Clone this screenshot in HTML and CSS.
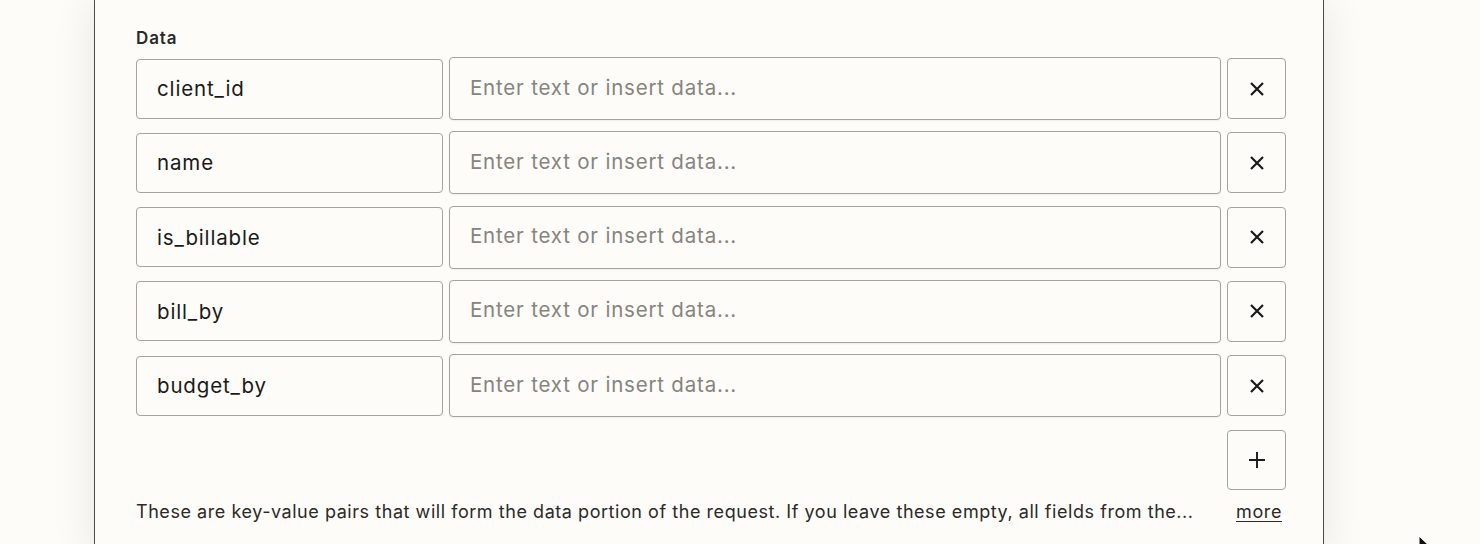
FILE: index.html
```html
<!DOCTYPE html>
<html lang="en">
<head>
<meta charset="utf-8">
<title>Data fields</title>
<link rel="stylesheet" href="styles.css">
</head>
<body>
<div class="stage">
  <section class="panel">
    <div class="field">
      <label class="field-label">Data</label>
      <div class="rows">
        <div class="row">
          <div class="key">client_id</div>
          <div class="value"><span class="placeholder">Enter text or insert data...</span></div>
          <button class="icon-btn" aria-label="Remove"><svg viewBox="0 0 16 16" width="16" height="16"><path d="M2 2L14 14M14 2L2 14" stroke="#1a1a1a" stroke-width="2.2" fill="none"/></svg></button>
        </div>
        <div class="row">
          <div class="key">name</div>
          <div class="value"><span class="placeholder">Enter text or insert data...</span></div>
          <button class="icon-btn" aria-label="Remove"><svg viewBox="0 0 16 16" width="16" height="16"><path d="M2 2L14 14M14 2L2 14" stroke="#1a1a1a" stroke-width="2.2" fill="none"/></svg></button>
        </div>
        <div class="row">
          <div class="key">is_billable</div>
          <div class="value"><span class="placeholder">Enter text or insert data...</span></div>
          <button class="icon-btn" aria-label="Remove"><svg viewBox="0 0 16 16" width="16" height="16"><path d="M2 2L14 14M14 2L2 14" stroke="#1a1a1a" stroke-width="2.2" fill="none"/></svg></button>
        </div>
        <div class="row">
          <div class="key">bill_by</div>
          <div class="value"><span class="placeholder">Enter text or insert data...</span></div>
          <button class="icon-btn" aria-label="Remove"><svg viewBox="0 0 16 16" width="16" height="16"><path d="M2 2L14 14M14 2L2 14" stroke="#1a1a1a" stroke-width="2.2" fill="none"/></svg></button>
        </div>
        <div class="row">
          <div class="key">budget_by</div>
          <div class="value"><span class="placeholder">Enter text or insert data...</span></div>
          <button class="icon-btn" aria-label="Remove"><svg viewBox="0 0 16 16" width="16" height="16"><path d="M2 2L14 14M14 2L2 14" stroke="#1a1a1a" stroke-width="2.2" fill="none"/></svg></button>
        </div>
      </div>
      <div class="add-row">
        <button class="icon-btn add" aria-label="Add"><svg viewBox="0 0 20 20" width="20" height="20"><path d="M10 2V18M2 10H18" stroke="#1a1a1a" stroke-width="1.9" fill="none"/></svg></button>
      </div>
      <div class="help">
        <p class="help-text">These are key-value pairs that will form the data portion of the request. If you leave these empty, all fields from the...</p>
        <a class="more" href="#">more</a>
      </div>
    </div>
  </section>
  <svg class="cursor" viewBox="0 0 12 18" width="12" height="18"><path d="M1 1L1 15L4.5 11.5L7 17L9 16L6.5 10.5L11 10.5Z" fill="#111" stroke="#fff" stroke-width="1"/></svg>
</div>
</body>
</html>
```

FILE: styles.css
```css
* { box-sizing: border-box; }

html, body {
  margin: 0;
  padding: 0;
  background: #fdfcf8;
  height: 544px;
  overflow: hidden;
  font-family: Inter, "Liberation Sans", sans-serif;
  color: #2b2a28;
}

.stage {
  position: relative;
  height: 544px;
  padding-left: 94px;
}

.panel {
  width: 1230px;
  height: 560px;
  background: #fdfcf8;
  border-left: 1px solid #4d4c49;
  border-right: 1px solid #4d4c49;
  box-shadow: 0 0 42px rgba(0, 0, 0, 0.09);
  padding: 27px 37px 0 41px;
}

.field-label {
  display: block;
  font-size: 17px;
  font-weight: 600;
  letter-spacing: 0.9px;
  line-height: 22px;
  color: #2b2a28;
  margin-bottom: 8px;
}

.rows {
  display: flex;
  flex-direction: column;
  gap: 11.3px;
}

.row {
  display: grid;
  grid-template-columns: 307px 772px 59px;
  column-gap: 6px;
  align-items: center;
}

.key {
  height: 60px;
  border: 1px solid #a5a39e;
  border-radius: 4px;
  padding: 0 20px;
  display: flex;
  align-items: center;
  font-size: 20.5px;
  letter-spacing: 0.85px;
  color: #1a1a19;
  background: #fdfcf8;
}

.value {
  height: 63px;
  border: 1px solid #a5a39e;
  border-radius: 4px;
  padding: 0 20px 3px;
  display: flex;
  align-items: center;
  font-size: 20.5px;
  letter-spacing: 0.8px;
  background: #fdfcf8;
  box-shadow: 0 1px 2px rgba(0, 0, 0, 0.06);
}

.placeholder {
  color: #86847f;
}

.icon-btn {
  width: 59px;
  height: 61px;
  border: 1px solid #a5a39e;
  border-radius: 4px;
  background: #fdfcf8;
  padding: 0;
  display: flex;
  align-items: center;
  justify-content: center;
}

.add-row {
  display: flex;
  justify-content: flex-end;
  margin-top: 13px;
}

.icon-btn.add {
  height: 60px;
}

.help {
  display: flex;
  align-items: center;
  margin-top: 10px;
}

.help-text {
  margin: 0;
  font-size: 18px;
  letter-spacing: 0.55px;
  line-height: 24px;
  color: #2b2a28;
  white-space: nowrap;
}

.more {
  margin-left: auto;
  margin-right: 4px;
  font-size: 18px;
  letter-spacing: 0.6px;
  line-height: 24px;
  color: #2b2a28;
  text-decoration: underline;
  text-underline-offset: 3px;
}

.cursor {
  position: absolute;
  left: 1418px;
  top: 535px;
}
```
